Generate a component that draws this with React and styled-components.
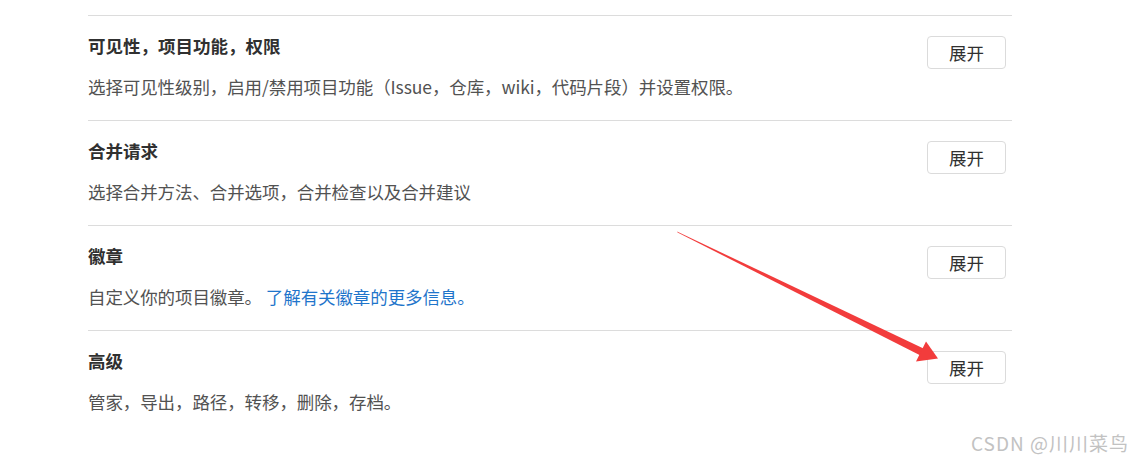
import React from "react";
import styled, { createGlobalStyle } from "styled-components";

const Global = createGlobalStyle`
  html, body { margin: 0; padding: 0; background: #fff; }
  body {
    font-family: "Noto Sans CJK SC", "Noto Sans", sans-serif;
    width: 1135px;
    height: 463px;
    overflow: hidden;
  }
`;

const Page = styled.div`
  position: relative;
  width: 1135px;
  height: 463px;
  box-sizing: border-box;
  padding: 15px 0 0 88px;
`;

const List = styled.div`
  width: 924px;
  display: flex;
  flex-direction: column;
`;

const Section = styled.section`
  box-sizing: border-box;
  height: 105px;
  border-top: 1px solid #dcdcdc;
  display: flex;
  justify-content: space-between;
  align-items: flex-start;
  padding: 18px 6px 0 0;
`;

const TextCol = styled.div`
  display: flex;
  flex-direction: column;
  gap: 17px;
`;

const Title = styled.h4`
  margin: 0;
  font-size: 17.5px;
  line-height: 24px;
  font-weight: 700;
  color: #303030;
`;

const Desc = styled.p`
  margin: 0;
  font-size: 17.5px;
  line-height: 24px;
  font-weight: 400;
  color: #525252;
  letter-spacing: -0.1px;
`;

const Link = styled.a`
  color: #1f75cb;
  text-decoration: none;
`;

const Button = styled.button`
  margin-top: 2px;
  width: 79px;
  height: 33px;
  box-sizing: border-box;
  border: 1px solid #dbdbdb;
  border-radius: 4px;
  background: #fff;
  font-family: "Noto Sans CJK SC", sans-serif;
  font-size: 17.5px;
  color: #303030;
  padding: 0;
  cursor: pointer;
`;

const Watermark = styled.div`
  position: absolute;
  left: 971px;
  top: 430px;
  font-size: 19px;
  letter-spacing: 1px;
  line-height: 26px;
  color: #c2c2c2;
  white-space: nowrap;
`;

const ArrowSvg = styled.svg`
  position: absolute;
  left: 0;
  top: 0;
  pointer-events: none;
`;

const sections = [
  {
    title: "可见性，项目功能，权限",
    desc: "选择可见性级别，启用/禁用项目功能（Issue，仓库，wiki，代码片段）并设置权限。",
  },
  { title: "合并请求", desc: "选择合并方法、合并选项，合并检查以及合并建议" },
  {
    title: "徽章",
    desc: (
      <>
        自定义你的项目徽章。 <Link href="#">了解有关徽章的更多信息。</Link>
      </>
    ),
  },
  { title: "高级", desc: "管家，导出，路径，转移，删除，存档。" },
];

export default function App() {
  return (
    <>
      <Global />
      <Page>
        <List>
          {sections.map((s, i) => (
            <Section key={i}>
              <TextCol>
                <Title>{s.title}</Title>
                <Desc>{s.desc}</Desc>
              </TextCol>
              <Button>展开</Button>
            </Section>
          ))}
        </List>
        <ArrowSvg width="1135" height="463" viewBox="0 0 1135 463">
          <polygon
            points="677,231.5 677.6,232.5 920.5,355.5 923.5,348.5"
            fill="#f23c3c"
          />
          <polygon points="938,358.5 916,361.5 926,341.5" fill="#f23c3c" />
        </ArrowSvg>
        <Watermark>CSDN @川川菜鸟</Watermark>
      </Page>
    </>
  );
}
